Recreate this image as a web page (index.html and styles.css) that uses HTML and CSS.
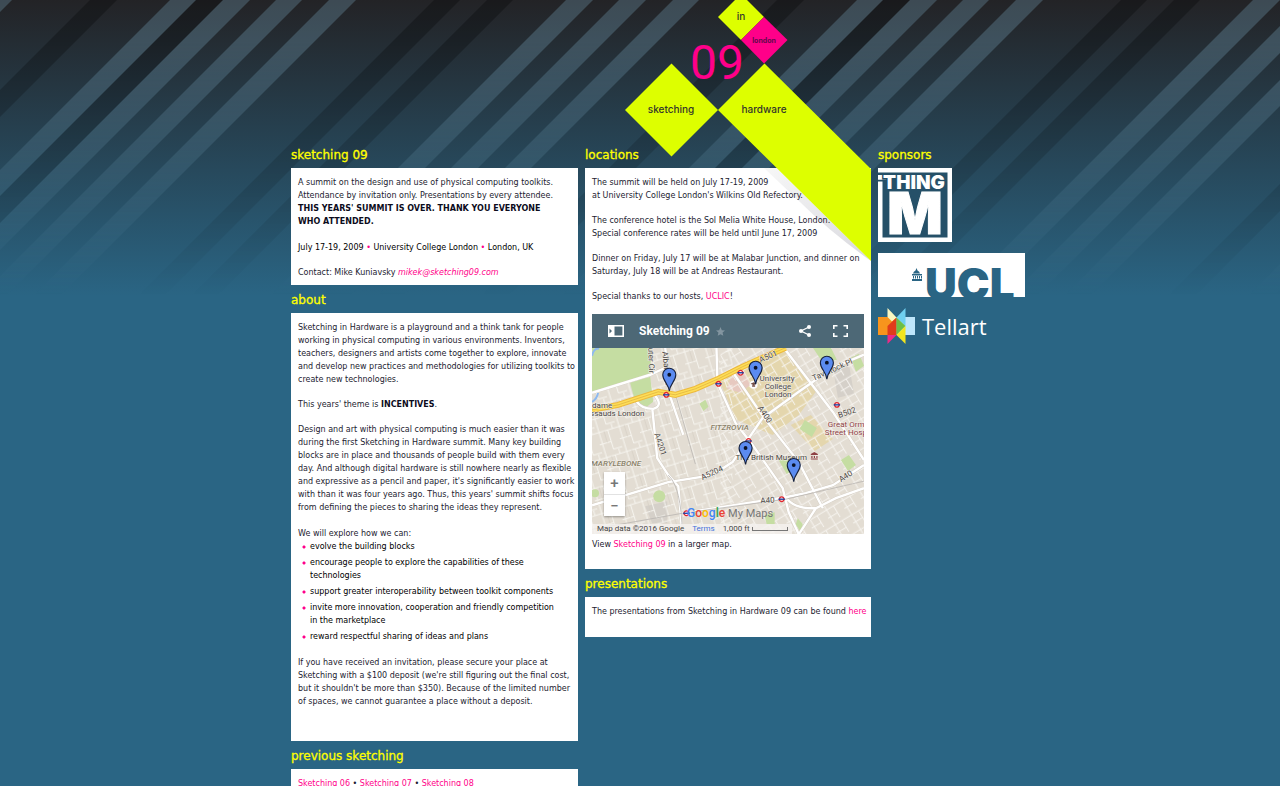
FILE: index.html
```html
<!DOCTYPE html>
<html lang="en">
<head>
<meta charset="utf-8">
<meta name="viewport" content="width=device-width, initial-scale=1">
<title>Sketching in Hardware 09</title>
<link rel="stylesheet" href="styles.css">
</head>
<body>
<svg class="stripes" aria-hidden="true">
  <defs>
    <pattern id="stripe" width="687" height="300" patternUnits="userSpaceOnUse" patternTransform="skewX(-45)">
      <g fill="#8cbed7" fill-opacity=".26">
        <rect x="-14" width="26" height="300"/><rect x="170" width="26" height="300"/><rect x="223" width="27" height="300"/>
        <rect x="276" width="26" height="300"/><rect x="329" width="27" height="300"/><rect x="566" width="27" height="300"/>
        <rect x="619" width="27" height="300"/><rect x="673" width="14" height="300"/>
      </g>
      <g fill="#000" fill-opacity=".26">
        <rect x="90" width="27" height="300"/><rect x="196" width="27" height="300"/><rect x="434" width="26" height="300"/><rect x="487" width="26" height="300"/>
      </g>
    </pattern>
  </defs>
  <rect width="100%" height="300" fill="url(#stripe)"/>
</svg>

<div class="page">
  <svg class="logo" width="246" height="262" viewBox="625 0 246 262" role="img" aria-label="Sketching in Hardware 09, London">
    <defs><linearGradient id="shade" x1="0" y1="0" x2="1" y2="1"><stop offset="0" stop-color="#f4f4f4"/><stop offset="1" stop-color="#c8c8d0"/></linearGradient></defs>
    <path d="M764 168h13l94 93Q830 232 800 202Z" fill="url(#shade)" fill-opacity=".7"/>
    <path d="M625 110l46.500-46.500L718 110l-46.500 46.500ZM718 110l46.500-46.500L871 169v92ZM718 17l23-23 23 23-23 23Z" fill="#df0"/>
    <path d="M764 17l23.500 23L764 63.500 741 40Z" fill="#ff0089"/>
    <g class="logo-text" text-anchor="middle">
      <text x="741" y="20">in</text><text x="671" y="113">sketching</text><text x="764" y="113">hardware</text>
      <text class="logo-city" x="764" y="43">london</text>
    </g>
    <text class="logo-year" x="717" y="79" text-anchor="middle">09</text>
  </svg>

  <main class="columns">
    <div class="column">
      <section>
        <h2>sketching 09</h2>
        <div class="box">
          <p>A summit on the design and use of physical computing toolkits.<br>Attendance by invitation only. Presentations by every attendee.<br><strong>THIS YEARS' SUMMIT IS OVER. THANK YOU EVERYONE<br>WHO ATTENDED.</strong></p>
          <p class="facts">July 17-19, 2009 <span class="dot">•</span> University College London <span class="dot">•</span> London, UK</p>
          <p>Contact: Mike Kuniavsky <a class="mail" href="mailto:mikek@sketching09.com">mikek@sketching09.com</a></p>
        </div>
      </section>
      <section>
        <h2>about</h2>
        <div class="box box-about">
          <p>Sketching in Hardware is a playground and a think tank for people<br>working in physical computing in various environments. Inventors,<br>teachers, designers and artists come together to explore, innovate<br>and develop new practices and methodologies for utilizing toolkits to<br>create new technologies.</p>
          <p>This years' theme is <strong>INCENTIVES</strong>.</p>
          <p>Design and art with physical computing is much easier than it was<br>during the first Sketching in Hardware summit. Many key building<br>blocks are in place and thousands of people build with them every<br>day. And although digital hardware is still nowhere nearly as flexible<br>and expressive as a pencil and paper, it's significantly easier to work<br>with than it was four years ago. Thus, this years' summit shifts focus<br>from defining the pieces to sharing the ideas they represent.</p>
          <p class="lead">We will explore how we can:</p>
          <ul>
            <li>evolve the building blocks</li>
            <li>encourage people to explore the capabilities of these<br>technologies</li>
            <li>support greater interoperability between toolkit components</li>
            <li>invite more innovation, cooperation and friendly competition<br>in the marketplace</li>
            <li>reward respectful sharing of ideas and plans</li>
          </ul>
          <p>If you have received an invitation, please secure your place at<br>Sketching with a $100 deposit (we're still figuring out the final cost,<br>but it shouldn't be more than $350). Because of the limited number<br>of spaces, we cannot guarantee a place without a deposit.</p>
        </div>
      </section>
      <section>
        <h2>previous sketching</h2>
        <div class="box">
          <p><a href="#s06">Sketching 06</a> • <a href="#s07">Sketching 07</a> • <a href="#s08">Sketching 08</a></p>
        </div>
      </section>
    </div>

    <div class="column">
      <section>
        <h2>locations</h2>
        <div class="box box-locations">
          <p>The summit will be held on July 17-19, 2009<br>at University College London's Wilkins Old Refectory.</p>
          <p>The conference hotel is the Sol Melia White House, London.<br>Special conference rates will be held until June 17, 2009</p>
          <p>Dinner on Friday, July 17 will be at Malabar Junction, and dinner on<br>Saturday, July 18 will be at Andreas Restaurant.</p>
          <p class="thanks">Special thanks to our hosts, <a href="#uclic">UCLIC</a>!</p>
          <div class="map">
            <div class="map-bar">
              <button class="icon" aria-label="Toggle legend"><svg width="16" height="12" viewBox="0 0 16 12"><path fill="#fff" fill-rule="evenodd" d="M0 0h16v12H0ZM6.500 1.600v8.800h7.900V1.600ZM1.500 3.500v5L4 6Z"/></svg></button>
              <span class="map-title">Sketching 09</span>
              <button class="icon" aria-label="Star map"><svg width="9" height="9" viewBox="0 0 24 24"><path fill="#8395a0" d="M12 0l3.500 8.500 8.500.7-6.500 5.700 2 8.600L12 19l-7.500 4.500 2-8.600L0 9.200l8.500-.7Z"/></svg></button>
              <button class="icon share" aria-label="Share"><svg width="12" height="12" viewBox="0 0 12 12"><path d="M10 2L2 6l8 4" fill="none" stroke="#fff" stroke-width="1.300"/><circle cx="10" cy="2" r="2" fill="#fff"/><circle cx="2" cy="6" r="2" fill="#fff"/><circle cx="10" cy="10" r="2" fill="#fff"/></svg></button>
              <button class="icon" aria-label="Full screen"><svg width="15" height="12" viewBox="0 0 15 12"><path d="M.8 4V.8H4.500M10.500.8h3.700V4M14.200 8v3.200h-3.700M4.500 11.200H.8V8" fill="none" stroke="#fff" stroke-width="1.600"/></svg></button>
            </div>
            <div class="map-view">
              <svg class="map-art" viewBox="0 0 271 186" preserveAspectRatio="xMidYMid slice" role="img" aria-label="Map of Fitzrovia, London">
                <defs>
                  <pattern id="streets" width="21" height="26" patternUnits="userSpaceOnUse" patternTransform="rotate(-17)"><path d="M0 5h21M0 17h12M12 25h9M3 0v26M12 5v20M17 0v5" stroke="#f8f6f1" stroke-width=".9" fill="none"/><path d="M8 5v12" stroke="#d3cdc2" stroke-width=".6"/></pattern>
                  <pattern id="streets2" width="19" height="17" patternUnits="userSpaceOnUse" patternTransform="rotate(-31)"><path d="M0 4h19M0 12h11M3 0v17M11 4v13" stroke="#f8f6f1" stroke-width=".9" fill="none"/></pattern>
                  <g id="tube"><circle r="2.300" fill="#fff" stroke="#e0262e" stroke-width="1.300"/><path d="M-3.200 0h6.400" stroke="#2342a0" stroke-width="1.400"/></g>
                  <g id="pin"><path d="M0 16.500C-.5 9-6.500 6.500-6.500 0a6.500 6.500 0 0 1 13 0C6.500 6.500.5 9 0 16.500Z" fill="#5b8bf0" stroke="#16213d" stroke-width="1.100"/><circle r="1.900" fill="#0b1226"/></g>
                </defs>
                <rect width="271" height="186" fill="#e3ddd3"/>
                <path d="M126 31l25-11 41-17 31 41-17 23-26 20-40-17-4-16ZM198 77l20-10 22 24-18 12Z" fill="#e4d6ad"/>
                <path d="M140 26l10-5 8 16-10 8-14-4Z" fill="#e7c9c0"/>
                <path d="M240 20l16-4 5 30-16 4ZM53 158l22-5v22H60Z" fill="#d5d0c9"/>
                <rect width="140" height="186" fill="url(#streets)"/><path d="M128 0h143v186H128Z" fill="url(#streets2)"/>
                <g fill="#c5dda2">
                  <path d="M0 0h59l-1 27L0 44ZM38 35l20-6 3 25-8 6-10-6ZM220 0h18l6 12-14 3ZM186 112l16-4 4 10-12 8ZM248 112l8-5 7 10-8 6ZM212 72l12 8-5 9-12-8ZM172 167l10-3v12h-8ZM258 10l8-4 5 12-8 6ZM107 56l6-4 3 7-5 4Z"/>
                  <circle cx="67" cy="148" r="6"/><circle cx="3" cy="145" r="4"/><path d="M205 170l5 6-2 8-5-8Z"/>
                </g>
                <path d="M0 8Q2 0 7 1M0 54q5-3 6-9" fill="none" stroke="#8db9f0" stroke-width="2"/>
                <path d="M271 7L240 20 206 44 170 70 140 114 120 127 76 134 0 157M140 24l30 44 36 46 24 46M191 0l49 64 31 48M125 35l18 40 17 22 30 43 6 24 10 22M90 165l103-16 20-4 27-8 31-20M193 149q8 12 30 11 12-6 20-10l28-10M223 160l-17 26M63 48q8 10-2 13-12 0-17-8M60 60l5 50 11 17 10 11 4 48M0 45l58-18 15-7M124 0l1 35M73 0l4 46 14 41" fill="none" stroke="#d2cbc0" stroke-width="3.200"/>
                <path d="M271 7L240 20 206 44 170 70 140 114 120 127 76 134 0 157M140 24l30 44 36 46 24 46M191 0l49 64 31 48M125 35l18 40 17 22 30 43 6 24 10 22M90 165l103-16 20-4 27-8 31-20M193 149q8 12 30 11 12-6 20-10l28-10M223 160l-17 26M63 48q8 10-2 13-12 0-17-8M60 60l5 50 11 17 10 11 4 48M0 45l58-18 15-7M124 0l1 35M73 0l4 46 14 41" fill="none" stroke="#fff" stroke-width="2.400"/>
                <path d="M0 181L90 165l103-14 78-18M76 127q13 12 14 58M83 46l20 70" fill="none" stroke="#b9b5b2" stroke-width=".8"/>
                <path d="M0 62L26 57 66 44l17 3 20-6 23-10 24-12 20-9 23-10" fill="none" stroke="#edb93c" stroke-width="6"/>
                <path d="M0 62L26 57 66 44l17 3 20-6 23-10 24-12 20-9 23-10" fill="none" stroke="#fddd57" stroke-width="4"/>
                <path d="M0 62L26 57 66 44l17 3 20-6 23-10 24-12 20-9 23-10" fill="none" stroke="#d9a63c" stroke-width=".6"/>
                <g class="map-label">
                  <text x="167" y="33">University</text><text x="172" y="41">College</text><text x="172" y="49">London</text>
                  <text x="0" y="60">dame</text><text x="-2" y="68">ssauds London</text>
                  <text x="143" y="112">The British Museum</text>
                  <g transform="translate(56 0) rotate(88)"><text>uter Cir</text></g><g transform="translate(70 4) rotate(84)"><text>Albany St</text></g>
                  <g transform="translate(168 15) rotate(-24)"><text>A501</text></g><g transform="translate(165 60) rotate(57)"><text>A400</text></g>
                  <g transform="translate(62 86) rotate(72)"><text>A4201</text></g><g transform="translate(110 132) rotate(-25)"><text>A5204</text></g>
                  <g transform="translate(168 155) rotate(-3)"><text>A40</text></g><g transform="translate(248 134) rotate(-32)"><text>A40</text></g>
                  <g transform="translate(246 70) rotate(-18)"><text>B502</text></g><g transform="translate(221 33) rotate(-24)"><text>Tavistock Pl</text></g>
                  <g fill="#8e4045"><text x="235" y="79">Great Orm</text><text x="232" y="87">Street Hosp</text></g>
                  <g class="map-area"><text x="118" y="82">FITZROVIA</text><text x="-1" y="118">MARYLEBONE</text></g>
                </g>
                <path d="M218 106l3.500-2 3.500 2v1h-7ZM218.500 108h1.200v2h-1.200ZM221 108h1.200v2H221ZM223.500 108h1.200v2h-1.200ZM218 110.500h7v1h-7Z" fill="#8e4045"/>
                <circle cx="161" cy="37" r="4" fill="#fff"/><path d="M158 36l3-1.500 3 1.500-3 1.500ZM159.500 37.500h3v1.500h-3Z" fill="#755048"/>
                <use href="#tube" x="74" y="47"/><use href="#tube" x="126" y="36"/><use href="#tube" x="148" y="25"/><use href="#tube" x="244" y="57"/><use href="#tube" x="156" y="93"/><use href="#tube" x="189" y="151"/><use href="#tube" x="94" y="165"/>
                <use href="#pin" x="77" y="27"/><use href="#pin" x="163" y="20"/><use href="#pin" x="234" y="15"/><use href="#pin" x="153" y="100"/><use href="#pin" x="201" y="117"/>
              </svg>
              <div class="zoom"><button aria-label="Zoom in">+</button><button aria-label="Zoom out">−</button></div>
              <div class="brand"><span class="g-blue">G</span><span class="g-red">o</span><span class="g-yellow">o</span><span class="g-blue">g</span><span class="g-green">l</span><span class="g-red">e</span> <span class="brand-maps">My Maps</span></div>
              <div class="credit"><span>Map data ©2016 Google</span><a href="#terms">Terms</a><span class="scale">1,000 ft <i class="rule"></i></span></div>
            </div>
          </div>
          <p class="after-map">View <a href="#map">Sketching 09</a> in a larger map.</p>
        </div>
      </section>
      <section>
        <h2>presentations</h2>
        <div class="box box-short">
          <p>The presentations from Sketching in Hardware 09 can be found <a href="#talks">here</a></p>
        </div>
      </section>
    </div>

    <aside class="column">
      <h2>sponsors</h2>
      <div class="sponsors">
        <a href="#thingm"><svg width="74" height="74" viewBox="0 0 74 74" role="img" aria-label="ThingM">
          <rect width="74" height="74" fill="#fff"/><path d="M0 4.500h69.500v65h-65v-56H0v-2h4.500V7H0Z" fill="#255068"/><path d="M0 7h9v4.500H0Z" fill="#fff"/>
          <g class="thingm"><text class="big-m" x="37" y="66" text-anchor="middle">M</text><text class="thing" x="36" y="21" text-anchor="middle">THING</text></g>
        </svg></a>
        <a href="#ucl"><svg width="147" height="44" viewBox="0 0 147 44" role="img" aria-label="UCL">
          <rect width="147" height="44" fill="#fff"/>
          <g fill="#2a6584"><path d="M38.500 15l1 2.500q2 1 2.500 3h-7q.5-2 2.500-3ZM34 21h10v1.500H34ZM34 26h10v2H34Z"/><path d="M35 23h1v2.500h-1ZM37 23h1v2.500h-1ZM39 23h1v2.500h-1ZM41 23h1v2.500h-1ZM43 23h1v2.500h-1Z"/></g>
          <text class="ucl" x="47" y="47">UCL</text>
        </svg></a>
        <a href="#tellart"><svg width="112" height="38" viewBox="0 0 112 38" role="img" aria-label="Tellart">
          <path fill="#f7941d" d="M0 9h18.500v18H0Z"/><path fill="#bde6fb" d="M18.500 9H37v18H18.500Z"/>
          <path fill="#fbf7c0" d="M9.500 0l9 9.500-4.500 4L9.500 9Z"/><path fill="#6fd0f0" d="M27.500 0v18l-9-8.500Z"/>
          <path fill="#e03c1a" d="M9.500 18l9-8.500V27h-9Z"/><path fill="#6cbf45" d="M18.500 9.500l9 8.500-9 9Z"/>
          <path fill="#ed2a86" d="M9.500 27h9l-9 9Z"/><path fill="#f2e51d" d="M27.500 18v18l-9-9Z"/>
          <text class="tellart" x="44" y="27">Tellart</text>
        </svg></a>
      </div>
    </aside>
  </main>
</div>
</body>
</html>
```

FILE: styles.css
```css
* { box-sizing: border-box; }

body {
  margin: 0;
  position: relative;
  background: #2a6584 linear-gradient(#232326, #2a6584 296px) no-repeat;
  color: #1c1c30;
  font: 8px/13px Verdana, "DejaVu Sans", sans-serif;
}

.stripes {
  position: absolute;
  top: 0;
  left: 0;
  width: 100%;
  height: 300px;
  mask-image: linear-gradient(#000 40px, transparent 296px);
}

.page {
  position: relative;
  max-width: 698px;
  margin: 0 auto;
  padding-top: 140px;
}

.logo {
  position: absolute;
  z-index: 1;
  top: 0;
  left: 334px;
  pointer-events: none;
}
.logo-text { font: 500 10px Inter, sans-serif; fill: #33362c; }
.logo-city { font-size: 7px; font-weight: 700; fill: #5e0a4a; }
.logo-year { font: 48px Roboto, sans-serif; fill: #ff0089; }

.columns {
  display: grid;
  grid-template-columns: 287px 286px minmax(0, 1fr);
  gap: 7px;
  align-items: start;
}

h2 {
  margin: 0;
  padding-top: 1px;
  height: 28px;
  color: #ff0;
  font-size: 12px;
  font-weight: 400;
  line-height: 28px;
  -webkit-text-stroke: .3px #ff0;
}

.box { background: #fff; padding: 8px 7px 6px; white-space: nowrap; }
.box-about { padding-bottom: 33px; }
.box-locations { padding-bottom: 18px; }
.box-short { padding-bottom: 19px; }

/* Text stays legible where the logo's shadow crosses a box. */
p { position: relative; z-index: 2; margin: 0 0 12px; }
p.facts { margin-top: 13px; color: #000; }
p.thanks { margin-bottom: 11px; }
p:last-child { margin-bottom: 0; }
p.lead { margin: 13px 0 0; }
strong { color: #0c0c1c; }

a { color: #ff0089; text-decoration: none; }
.mail { font-style: italic; }
.dot { color: #ff0089; }

ul { margin: 0 0 13px; padding: 0; color: #000; list-style: none; }
li {
  margin-bottom: 3px;
  padding-left: 12px;
  background: radial-gradient(circle at 6px 7px, #ff0089 1px, transparent 2px);
}
li:last-child { margin-bottom: 0; }

.map { font-family: Roboto, sans-serif; }
.map-bar {
  display: flex;
  align-items: center;
  height: 34px;
  padding: 0 16px;
  background: #4d6876;
}
.icon { display: flex; border: 0; padding: 0; background: none; }
.map-title { margin: 0 6px 0 15px; color: #fff; font-size: 12px; font-weight: 700; }
.share { margin: 0 22px 0 auto; }

.map-view { position: relative; }
.map-art { display: block; width: 100%; height: 186px; }
.map-label {
  font: 8px Roboto, sans-serif;
  fill: #4a4643;
  paint-order: stroke;
  stroke: #f3f0ea;
  stroke-width: 1px;
}
.map-area { font-style: italic; font-weight: 500; fill: #8a8168; }

.zoom {
  position: absolute;
  left: 12px;
  bottom: 18px;
  width: 21px;
  background: #fff;
  box-shadow: 0 1px 2px rgba(0, 0, 0, .35);
}
.zoom button {
  display: block;
  width: 100%;
  height: 22px;
  border: 0;
  padding: 0;
  background: none;
  color: #777;
  font: 500 15px/20px Roboto, sans-serif;
}
.zoom button + button { border-top: 1px solid #e2e2e2; }

.brand {
  position: absolute;
  left: 95px;
  bottom: 14px;
  font-size: 12px;
  font-weight: 500;
}
.brand-maps { color: #777; font-size: 11px; font-weight: 400; }
.g-blue { color: #4285f4; }
.g-red { color: #ea4335; }
.g-yellow { color: #fbbc05; }
.g-green { color: #34a853; }

.credit {
  position: absolute;
  left: 0;
  bottom: 0;
  display: flex;
  gap: 8px;
  width: 200px;
  height: 10px;
  padding-left: 5px;
  background: rgba(245, 243, 240, .8);
  color: #444;
  line-height: 10px;
}
.credit a { color: #4272db; }
.rule {
  display: inline-block;
  width: 36px;
  height: 4px;
  border: 1px solid #777;
  border-top: 0;
}
p.after-map { margin-top: 4px; }

.sponsors { display: grid; gap: 11px; }
.sponsors a, .sponsors svg { display: block; }
.thingm { font: 900 19px Inter, sans-serif; fill: #fff; }
.thing { paint-order: stroke; stroke: #255068; stroke-width: 3px; }
.big-m { font-size: 58px; stroke: #fff; stroke-width: 1px; }
.ucl { font: 900 44px Inter, sans-serif; fill: #2a6584; }
.tellart { font: 22px "Open Sans", sans-serif; fill: #fff; }
```
